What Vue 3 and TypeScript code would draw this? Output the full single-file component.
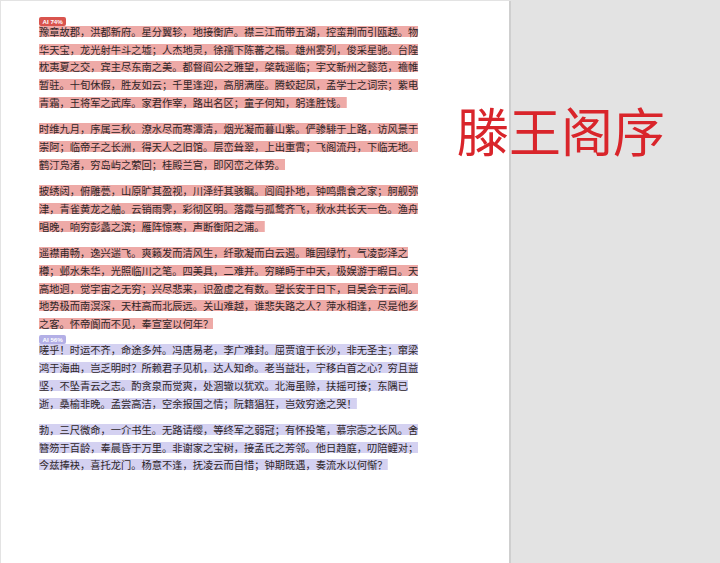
<script setup lang="ts">
interface Section {
  label: string
  tone: string
  paragraphs: string[]
}

const sections: Section[] = [
  {
    label: 'AI 74%',
    tone: 'red',
    paragraphs: [
      '豫章故郡，洪都新府。星分翼轸，地接衡庐。襟三江而带五湖，控蛮荆而引瓯越。物华天宝，龙光射牛斗之墟；人杰地灵，徐孺下陈蕃之榻。雄州雾列，俊采星驰。台隍枕夷夏之交，宾主尽东南之美。都督阎公之雅望，棨戟遥临；宇文新州之懿范，襜帷暂驻。十旬休假，胜友如云；千里逢迎，高朋满座。腾蛟起凤，孟学士之词宗；紫电青霜，王将军之武库。家君作宰，路出名区；童子何知，躬逢胜饯。',
      '时维九月，序属三秋。潦水尽而寒潭清，烟光凝而暮山紫。俨骖騑于上路，访风景于崇阿；临帝子之长洲，得天人之旧馆。层峦耸翠，上出重霄；飞阁流丹，下临无地。鹤汀凫渚，穷岛屿之萦回；桂殿兰宫，即冈峦之体势。',
      '披绣闼，俯雕甍，山原旷其盈视，川泽纡其骇瞩。闾阎扑地，钟鸣鼎食之家；舸舰弥津，青雀黄龙之舳。云销雨霁，彩彻区明。落霞与孤鹜齐飞，秋水共长天一色。渔舟唱晚，响穷彭蠡之滨；雁阵惊寒，声断衡阳之浦。',
      '遥襟甫畅，逸兴遄飞。爽籁发而清风生，纤歌凝而白云遏。睢园绿竹，气凌彭泽之樽；邺水朱华，光照临川之笔。四美具，二难并。穷睇眄于中天，极娱游于暇日。天高地迥，觉宇宙之无穷；兴尽悲来，识盈虚之有数。望长安于日下，目吴会于云间。地势极而南溟深，天柱高而北辰远。关山难越，谁悲失路之人？萍水相逢，尽是他乡之客。怀帝阍而不见，奉宣室以何年？',
    ],
  },
  {
    label: 'AI 56%',
    tone: 'purple',
    paragraphs: [
      '嗟乎！时运不齐，命途多舛。冯唐易老，李广难封。屈贾谊于长沙，非无圣主；窜梁鸿于海曲，岂乏明时？所赖君子见机，达人知命。老当益壮，宁移白首之心？穷且益坚，不坠青云之志。酌贪泉而觉爽，处涸辙以犹欢。北海虽赊，扶摇可接；东隅已逝，桑榆非晚。孟尝高洁，空余报国之情；阮籍猖狂，岂效穷途之哭！',
      '勃，三尺微命，一介书生。无路请缨，等终军之弱冠；有怀投笔，慕宗悫之长风。舍簪笏于百龄，奉晨昏于万里。非谢家之宝树，接孟氏之芳邻。他日趋庭，叨陪鲤对；今兹捧袂，喜托龙门。杨意不逢，抚凌云而自惜；钟期既遇，奏流水以何惭？',
    ],
  },
]
</script>

<template>
  <div class="page">
    <main class="doc">
      <section v-for="s in sections" :key="s.label" class="section" :class="s.tone">
        <span class="badge">{{ s.label }}</span>
        <p v-for="(p, i) in s.paragraphs" :key="i" class="para"><span class="mark">{{ p }}</span></p>
      </section>
    </main>
    <aside class="side">
      <h1 class="title">滕王阁序</h1>
    </aside>
  </div>
</template>

<style scoped>
.page {
  display: flex;
  width: 720px;
  height: 563px;
  overflow: hidden;
  background: #e3e3e3;
  font-family: "Noto Sans CJK SC", "Liberation Sans", sans-serif;
}
.doc {
  box-sizing: border-box;
  width: 510px;
  height: 562px;
  margin-left: 1px;
  margin-top: 1px;
  padding: 22px 90px 0 38px;
  background: #fff;
  border-right: 2px solid #cfcfcf;
  flex: none;
}
.section {
  position: relative;
}
.badge {
  position: absolute;
  left: 0;
  top: -6px;
  box-sizing: border-box;
  height: 9px;
  padding: 0 3.5px;
  border-radius: 2px;
  color: #fff;
  font-family: "Liberation Sans", sans-serif;
  font-size: 6.2px;
  font-weight: 700;
  line-height: 9px;
  white-space: nowrap;
}
.red .badge {
  background: #d9544e;
}
.purple .badge {
  background: #b3afe6;
}
.para {
  margin: 0 0 8.8px;
  font-size: 10.25px;
  line-height: 17.7px;
  color: #2e2628;
}
.mark {
  background-repeat: no-repeat;
  background-position: center;
  background-size: 100% 11px;
  -webkit-box-decoration-break: clone;
  box-decoration-break: clone;
}
.red .mark {
  background-image: linear-gradient(#eeaaa7, #eeaaa7);
}
.purple .mark {
  background-image: linear-gradient(#d4d1f1, #d4d1f1);
}
.side {
  flex: 1;
  min-width: 0;
  position: relative;
}
.title {
  position: absolute;
  left: -54px;
  top: 98px;
  margin: 0;
  white-space: nowrap;
  font-size: 52px;
  line-height: 64px;
  font-weight: 400;
  color: #d9252b;
}
</style>
